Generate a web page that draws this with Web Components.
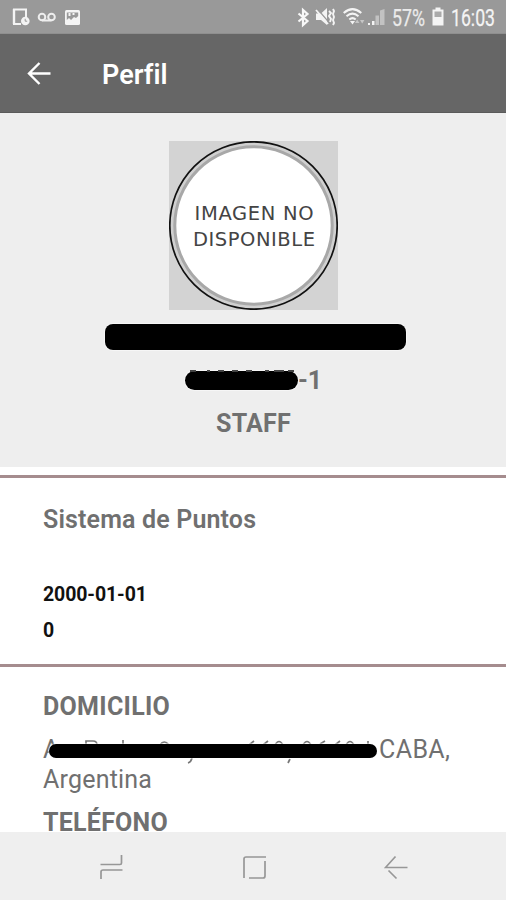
<!DOCTYPE html>
<html lang="es"><head><meta charset="utf-8"><title>Perfil</title>
<style>html,body{margin:0;height:900px;overflow:hidden;background:#fff;font-family:Roboto,"Liberation Sans",sans-serif;color:#707070}</style></head>
<body>
<profile-screen></profile-screen>
<script>
const define=(name,html)=>{
  const t=document.createElement('template');t.innerHTML=html;
  customElements.define(name,class extends HTMLElement{
    constructor(){super();this.attachShadow({mode:'open'}).append(t.content.cloneNode(true));}
  });
};
/* One line of text, sized through --s (size), --w (weight), --ls (tracking). */
define('text-line',`<style>:host{display:block;font-size:var(--s,25px);font-weight:var(--w,700);letter-spacing:var(--ls,0);white-space:nowrap;line-height:var(--lh,30px)}</style><slot></slot>`);

/* Text squeezed horizontally into a fixed width. */
customElements.define('narrow-text',class extends HTMLElement{
  connectedCallback(){
    const w=+this.getAttribute('width'),s=this.getAttribute('size');
    this.attachShadow({mode:'open'}).innerHTML=`<style>:host{display:block}svg{display:block;overflow:visible}text{font-size:${s}px;fill:currentColor;stroke:currentColor;stroke-width:.25px}</style><svg width="${w+2}" height="28"><text y="20" textLength="${w}" lengthAdjust="spacingAndGlyphs">${this.textContent}</text></svg>`;
  }
});

define('status-bar',`<style>
:host{display:flex;height:34px;box-sizing:border-box;background:#999;color:#f4f4f4;align-items:flex-start;padding:6px 9px 0 12px;border-bottom:1px solid #8f8f8f}
svg{display:block;overflow:visible}.gap{flex:1}.pct{color:#ebebeb}
</style>
<svg width="18" height="20" viewBox="0 0 18 20" fill="none" stroke="#f4f4f4" stroke-width="2"><path d="M14 11V3.500H2v14.500h7"/><path d="M2 3v15" stroke-width="2.400"/><circle cx="13.300" cy="15" r="4.300" fill="#f4f4f4" stroke="none"/><path d="M13.200 12.800v2.400h2" stroke="#999" stroke-width="1"/></svg>
<svg style="margin-left:7px" width="20" height="20" viewBox="0 0 20 20" fill="none" stroke="#eee" stroke-width="2"><circle cx="5" cy="11" r="3.300"/><circle cx="14.500" cy="11" r="3.300"/><path d="M5 14.500h9.500"/></svg>
<svg style="margin-left:8px" width="16" height="20" viewBox="0 0 16 20"><rect x="0" y="4" width="15" height="15" rx="1.500" fill="#f4f4f4"/><path d="M1.800 14V6.500h11.400V10l-2.200 2-2-1-3 3-2-2z" fill="#999"/><path d="M3.500 7h2v3h-2zM7.500 7h2v2h-2z" fill="#f4f4f4"/></svg>
<span class="gap"></span>
<svg width="13" height="22" viewBox="0 0 13 22" fill="none" stroke="#f8f8f8" stroke-width="2.200"><path d="M1.500 7.500l9 7.500-4.500 4V4l4.500 4-9 7.500"/></svg>
<svg style="margin-left:6px" width="20" height="22" viewBox="0 0 20 22" fill="#f4f4f4"><path d="M0 7.500h5l6-5.500v17l-6-5H0z"/><path d="M1 2.500l12 14" stroke="#999" stroke-width="1.200"/><path d="M0 4l12 14" stroke="#f4f4f4" stroke-width="1.800"/><path d="M13 5l2 2-2 3 2 3-1 3M17 3l1 2-1 3 1 3-1 3 1 3-1 2" stroke="#f4f4f4" stroke-width="1.900" fill="none"/></svg>
<svg style="margin-left:7px" width="22" height="22" viewBox="0 0 22 22" fill="none" stroke="#f4f4f4" stroke-width="2"><path d="M.7 7Q9.500-.8 18.300 7M3.500 10.300Q9.500 5 15.500 10.300M6.300 13.500Q9.500 10.800 12.700 13.500"/><path d="M7 15h5l-2.500 3.500z" fill="#f4f4f4" stroke="none"/><path d="M12 17l2.200-3.500 2.200 3.500zm5-3h4.400l-2.200 3.500z" fill="#c6c6c6" stroke="none"/></svg>
<svg style="margin-left:3px" width="18" height="22" viewBox="0 0 18 22"><path d="M0 17h2v2H0zM4 15h2.500v4H4z" fill="#f4f4f4"/><path d="M7.500 9.500h3.500v9.500H7.500zM12 4.500l4.500-1.500v16H12z" fill="#c2c2c2"/></svg>
<narrow-text class="pct" style="margin-left:6px" width="33" size="23">57%</narrow-text>
<svg style="margin-left:5px" width="13" height="22" viewBox="0 0 13 22"><path d="M3.500 1.500h5v2h3v16H.5v-16h3z" fill="#f4f4f4"/><path d="M2.500 5.500h7v5.500h-7z" fill="#aaa"/></svg>
<narrow-text style="margin-left:6px" width="44" size="23.500">16:03</narrow-text>`);

define('app-bar',`<style>:host{display:flex;height:79px;box-sizing:border-box;background:#666;color:#fff;padding:26px 0 0 27px;gap:51px;border-bottom:1px solid #5a5a5a}svg{margin-top:1px;flex:none}</style>
<svg width="24" height="26" viewBox="0 0 24 26" fill="none" stroke="#fff" stroke-width="2.400"><path d="M23.500 12.500H2.500M12.500 2L2 12.500 12.500 23"/></svg>
<text-line style="--s:27px;--ls:0.050px;--w:600"><slot></slot></text-line>`);

define('avatar-placeholder',`<style>:host{display:block;width:169px;height:169px;background:#d3d3d3}svg{display:block}text{font-family:"DejaVu Sans",sans-serif;font-size:19.500px;fill:#444;text-anchor:middle}</style>
<svg width="169" height="169" viewBox="0 0 169 169"><circle cx="84.500" cy="84.500" r="83.700" fill="#d0d0d0" stroke="#111" stroke-width="1.700"/><circle cx="84.500" cy="84.500" r="78.700" fill="#fff" stroke="#a8a8a8" stroke-width="3"/><text x="85" y="79" textLength="119">IMAGEN NO</text><text x="85" y="104.500" textLength="122">DISPONIBLE</text></svg>`);

define('redaction-bar',`<style>:host{display:block;background:#000;box-shadow:0 0 1px 1px rgba(255,255,255,.5)}</style>`);

define('profile-header',`<style>
:host{display:flex;flex-direction:column;align-items:center;height:354px;box-sizing:border-box;background:#eee;padding-top:28px}
.name{width:301px;height:26px;border-radius:8px;margin:14px 0 0 5px}
.id{display:flex;height:30px;margin:16px 0 0 1px}
.mask{position:relative;width:113px;height:19px;margin-top:5px}
.mask redaction-bar{height:19px;border-radius:9.500px}
svg{position:absolute;left:0;top:-2px}
</style>
<avatar-placeholder></avatar-placeholder>
<redaction-bar class="name"></redaction-bar>
<div class="id"><span class="mask"><redaction-bar></redaction-bar><svg width="113" height="5" stroke="#444" stroke-width="2"><path d="M5 2h6M22 2h3M33 2h6M47 2h6M61 2h6M80 2h4M89 2h10M103 2h6"/></svg></span><text-line style="--s:25px">-1</text-line></div>
<text-line style="margin:13px 0 0 1px;--ls:.2px">STAFF</text-line>`);

define('profile-section',`<style>:host{display:block;box-sizing:border-box;border-top:3px solid #a58c8e;padding-left:43px}</style><slot></slot>`);

define('masked-address',`<style>
:host{display:block}.row{position:relative;display:flex;height:30px}
.bar{position:absolute;left:6px;top:8.500px;width:328px;height:14.500px;border-radius:7.500px}
svg{position:absolute;left:0;top:0}.end{margin-left:318px}
</style>
<div class="row"><text-line style="--w:400;width:18px">A</text-line><svg width="340" height="32" fill="none" stroke="#777" stroke-width="1.700"><path d="M43 11V6h7q4 0 4 4M80 5v5M117 10q4-6 9 0M149 23q-1 4-4 5M206 10l5-4M220 10l5-4M232 10q4-7 8 0M247 24l-2 4M260 10q4-7 8 0M277 9l5-3M292 10l5-4M303 10q4-7 8 0M325 6v5"/></svg><redaction-bar class="bar"></redaction-bar><text-line class="end" style="--w:400;--ls:.4px">CABA,</text-line></div>
<text-line style="--w:400;--ls:.2px">Argentina</text-line>`);

define('navigation-bar',`<style>:host{display:flex;height:68px;background:#efefef;align-items:flex-start;padding:22px 0 0 99px;gap:117.500px;box-sizing:border-box}svg{fill:none;stroke:#979797;stroke-width:1.700;flex:none}</style>
<svg width="25" height="26" viewBox="0 0 25 26"><path d="M1.500 10.500H21q1.500 0 1.500-1.500V1M23.500 16H4q-2 0-2 2v7"/></svg>
<svg width="25" height="26" viewBox="0 0 25 26"><path d="M2 24V5q0-2 2-2h20M23 7v15q0 2-2 2H7"/></svg>
<svg width="25" height="26" viewBox="0 0 25 26"><path d="M23.500 13.500H1.500L11.500 2.500M4.500 16.500l8 8"/></svg>`);

define('profile-screen',`<style>
:host{display:flex;flex-direction:column;width:506px;height:900px;overflow:hidden}
main{height:720px;margin-bottom:-1px;flex:none}.points{margin-top:8px;height:189px;padding-top:27px}.contact{padding-top:25px}
</style>
<status-bar></status-bar><app-bar>Perfil</app-bar>
<main><profile-header></profile-header>
<profile-section class="points"><text-line style="--w:600;--ls:.150px">Sistema de Puntos</text-line>
<text-line style="margin-top:45px;--s:19.500px;--ls:-.1px;color:#111">2000-01-01</text-line><text-line style="margin-top:6px;--s:19.500px;color:#111">0</text-line></profile-section>
<profile-section class="contact"><text-line style="--ls:.300px">DOMICILIO</text-line><masked-address style="margin-top:13px"></masked-address><text-line style="margin-top:13px;--lh:29px;--ls:.250px">TELÉFONO</text-line></profile-section></main>
<navigation-bar></navigation-bar>`);
</script></body></html>
